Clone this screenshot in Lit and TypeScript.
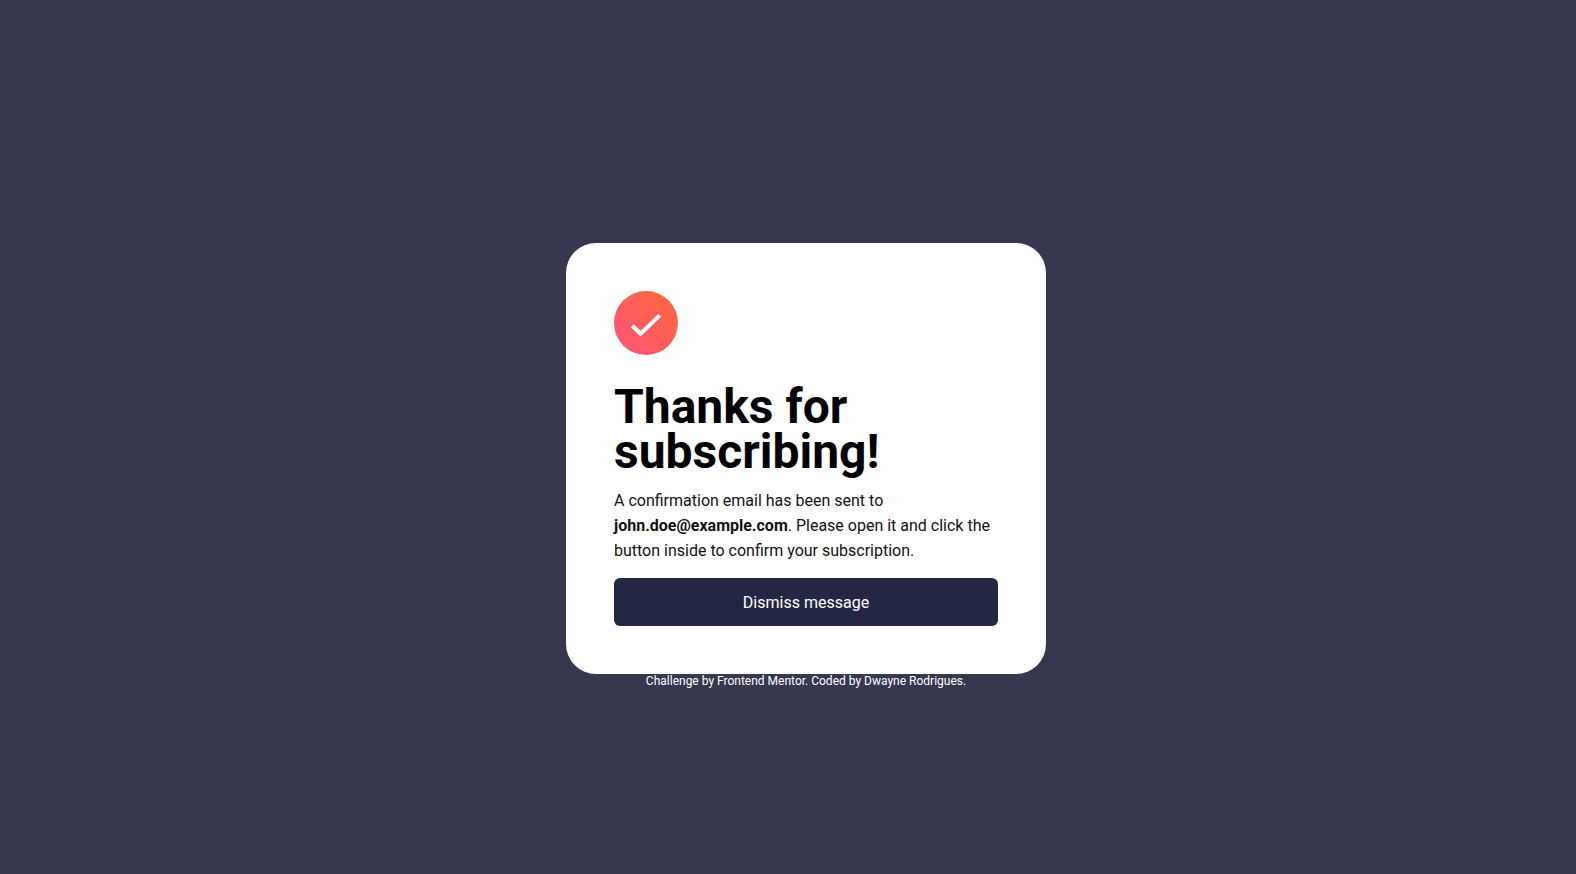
import { LitElement, html, css } from "lit";
import { customElement, property } from "lit/decorators.js";

@customElement("app-root")
export class AppRoot extends LitElement {
  @property() email = "john.doe@example.com";

  static styles = css`
    :host {
      display: flex;
      flex-direction: column;
      align-items: center;
      justify-content: center;
      min-height: 100vh;
      box-sizing: border-box;
      padding: 57px 0 0 36px;
      background: #36384d;
      color: #000;
      font-family: Roboto, sans-serif;
      font-size: 16px;
    }
    .card {
      box-sizing: border-box;
      width: 100%;
      max-width: 480px;
      padding: 48px;
      border-radius: 30px;
      background: #fff;
    }
    .icon {
      display: block;
    }
    .title {
      margin: 29px 0 14px;
      font-size: 48px;
      line-height: 45px;
      font-weight: 700;
    }
    .text {
      margin: 0 0 15px;
      line-height: 25px;
      color: #121212;
    }
    .dismiss {
      display: block;
      width: 100%;
      padding: 13px 12px 11px;
      border: 0;
      border-radius: 6px;
      background: #242742;
      color: #fff;
      font: inherit;
      line-height: 24px;
      cursor: pointer;
    }
    .credit {
      font-size: 12px;
      line-height: 14px;
      text-align: center;
      color: #fff;
    }
    .link {
      color: inherit;
      text-decoration: none;
    }
  `;

  render() {
    return html`
      <main class="card">
        <svg class="icon" width="64" height="64" viewBox="0 0 64 64" aria-hidden="true">
          <defs>
            <linearGradient id="g" x1="100%" x2="0%" y1="0%" y2="100%">
              <stop offset="0%" stop-color="#FF6A3A" />
              <stop offset="100%" stop-color="#FF527B" />
            </linearGradient>
          </defs>
          <circle cx="32" cy="32" r="32" fill="url(#g)" />
          <path fill="none" stroke="#fff" stroke-width="4" d="m18.286 34.686 8.334 7.98 19.094-18.285" />
        </svg>
        <h1 class="title">Thanks for subscribing!</h1>
        <p class="text">
          A confirmation email has been sent to <strong>${this.email}</strong>.
          Please open it and click the button inside to confirm your subscription.
        </p>
        <button class="dismiss" type="button">Dismiss message</button>
      </main>
      <footer class="credit">
        Challenge by <a class="link" href="#">Frontend Mentor</a>. Coded by
        <a class="link" href="#">Dwayne Rodrigues</a>.
      </footer>
    `;
  }
}
